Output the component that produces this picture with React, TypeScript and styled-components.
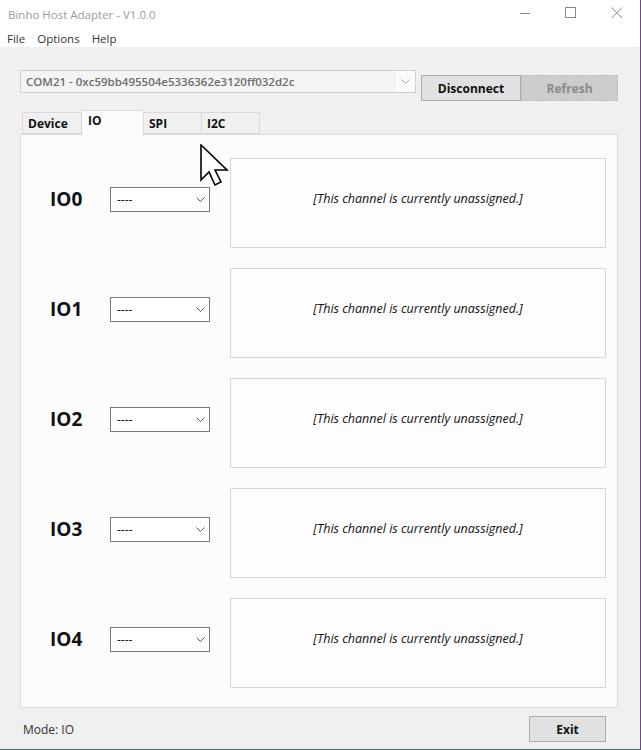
import React from "react";
import styled, { createGlobalStyle } from "styled-components";

const GlobalStyle = createGlobalStyle`
    html, body {
        margin: 0;
        padding: 0;
        background: #f0f0f0;
    }
    * {
        box-sizing: border-box;
    }
`;

const FONT = `"Open Sans", "Noto Sans", sans-serif`;

const channels = ["IO0", "IO1", "IO2", "IO3", "IO4"];

const App = () => {
    return (
        <Window>
            <GlobalStyle />
            <TitleBar>
                <Title>Binho Host Adapter - V1.0.0</Title>
                <Controls>
                    <ControlButton>
                        <svg width="12" height="12" viewBox="0 0 12 12">
                            <path d="M1 6.5h10" stroke="#8a8a8a" strokeWidth="1" />
                        </svg>
                    </ControlButton>
                    <ControlButton>
                        <svg width="12" height="12" viewBox="0 0 12 12">
                            <rect x="0.5" y="0.5" width="10" height="10" fill="none" stroke="#8a8a8a" strokeWidth="1" />
                        </svg>
                    </ControlButton>
                    <ControlButton>
                        <svg width="12" height="12" viewBox="0 0 12 12">
                            <path d="M0.5 0.5l10.5 10.5M11 0.5L0.5 11" stroke="#8a8a8a" strokeWidth="1" />
                        </svg>
                    </ControlButton>
                </Controls>
            </TitleBar>
            <MenuBar>
                <MenuItem>File</MenuItem>
                <MenuItem>Options</MenuItem>
                <MenuItem>Help</MenuItem>
            </MenuBar>
            <Body>
                <TopRow>
                    <Combo>
                        <ComboText>COM21 - 0xc59bb495504e5336362e3120ff032d2c</ComboText>
                        <ComboArrow>
                            <svg width="9" height="6" viewBox="0 0 9 6">
                                <path d="M0.5 0.5l4 4 4-4" fill="none" stroke="#a0a0a0" strokeWidth="1" />
                            </svg>
                        </ComboArrow>
                    </Combo>
                    <ButtonGroup>
                        <PushButton>Disconnect</PushButton>
                        <PushButton disabled>Refresh</PushButton>
                    </ButtonGroup>
                </TopRow>
                <TabStrip>
                    <Tab $width={60}>Device</Tab>
                    <Tab $width={63} $active>
                        IO
                    </Tab>
                    <Tab $width={59}>SPI</Tab>
                    <Tab $width={59}>I2C</Tab>
                </TabStrip>
                <Panel>
                    {channels.map((name) => (
                        <ChannelRow key={name}>
                            <ChannelLabel>{name}</ChannelLabel>
                            <Select>
                                <span>----</span>
                                <svg width="9" height="6" viewBox="0 0 9 6">
                                    <path d="M0.5 0.5l4 4 4-4" fill="none" stroke="#555" strokeWidth="1" />
                                </svg>
                            </Select>
                            <ChannelBox>[This channel is currently unassigned.]</ChannelBox>
                        </ChannelRow>
                    ))}
                </Panel>
                <StatusRow>
                    <Mode>Mode: IO</Mode>
                    <ExitButton>Exit</ExitButton>
                </StatusRow>
            </Body>
            <Cursor>
                <svg width="30" height="44" viewBox="0 0 30 44">
                    <path
                        d="M1 1 L1 36 L9 28 L15 41 L21 38 L15 26 L27 26 Z"
                        fill="#fff"
                        stroke="#000"
                        strokeWidth="1.6"
                        strokeLinejoin="miter"
                    />
                </svg>
            </Cursor>
        </Window>
    );
};

export default App;

const Window = styled.div`
    position: relative;
    width: 641px;
    height: 750px;
    display: flex;
    flex-direction: column;
    background: #f0f0f0;
    border-right: 1px solid #6e4683;
    border-bottom: 1px solid #3f6a66;
    font-family: ${FONT};
    overflow: hidden;
`;

const TitleBar = styled.div`
    height: 30px;
    background: #fff;
    display: flex;
    align-items: center;
    padding-left: 8px;
`;

const Title = styled.div`
    flex: 1;
    font-size: 11.5px;
    color: #9a9a9a;
    padding-bottom: 2px;
`;

const Controls = styled.div`
    display: flex;
    height: 100%;
`;

const ControlButton = styled.div`
    width: 46px;
    height: 100%;
    display: flex;
    align-items: center;
    justify-content: center;
    padding-bottom: 4px;
`;

const MenuBar = styled.div`
    height: 17px;
    background: #fff;
    display: flex;
    align-items: center;
    padding-left: 1px;
`;

const MenuItem = styled.div`
    font-size: 11.5px;
    color: #333;
    padding: 0 6px;
    line-height: 17px;
`;

const Body = styled.div`
    flex: 1;
    display: flex;
    flex-direction: column;
    padding: 23px 20px 0 20px;
`;

const TopRow = styled.div`
    display: flex;
    align-items: flex-start;
    gap: 5px;
`;

const Combo = styled.div`
    width: 396px;
    flex-shrink: 0;
    height: 23px;
    border: 1px solid #cfcfcf;
    background: #f4f4f4;
    display: flex;
    align-items: center;
    padding-left: 5px;
`;

const ComboText = styled.div`
    flex: 1;
    font-size: 11.5px;
    font-weight: 600;
    color: #6d6d6d;
    white-space: nowrap;
    overflow: hidden;
`;

const ComboArrow = styled.div`
    width: 19px;
    height: 100%;
    display: flex;
    align-items: center;
    justify-content: center;
    background: #fbfbfb;
`;

const ButtonGroup = styled.div`
    display: flex;
    flex-shrink: 0;
    margin-top: 5px;
`;

const PushButton = styled.button`
    width: ${(p) => (p.disabled ? "97px" : "100px")};
    height: 26px;
    font-family: ${FONT};
    font-size: 12px;
    font-weight: 700;
    color: ${(p) => (p.disabled ? "#8a8a8a" : "#111")};
    background: ${(p) => (p.disabled ? "#cccccc" : "#e1e1e1")};
    border: 1px ${(p) => (p.disabled ? "dashed #bfbfbf" : "solid #adadad")};
    padding: 0;
`;

const TabStrip = styled.div`
    display: flex;
    align-items: flex-end;
    margin-top: 9px;
    margin-left: 3px;
    height: 24px;
    position: relative;
    z-index: 1;
`;

const Tab = styled.div<{ $width: number; $active?: boolean }>`
    width: ${(p) => p.$width}px;
    height: ${(p) => (p.$active ? "25px" : "22px")};
    margin-bottom: ${(p) => (p.$active ? "-1px" : "0")};
    background: ${(p) => (p.$active ? "#fcfcfc" : "#f0f0f0")};
    border: 1px solid #d9d9d9;
    border-bottom: ${(p) => (p.$active ? "none" : "1px solid #d9d9d9")};
    margin-left: -1px;
    font-size: 12px;
    font-weight: 700;
    color: #111;
    display: flex;
    align-items: ${(p) => (p.$active ? "flex-start" : "center")};
    padding: ${(p) => (p.$active ? "1px 0 0 6px" : "0 0 0 5px")};
`;

const Panel = styled.div`
    width: 598px;
    height: 574px;
    background: #fcfcfc;
    border: 1px solid #dadada;
    display: flex;
    flex-direction: column;
    gap: 20px;
    padding: 23px 11px 0 0;
`;

const ChannelRow = styled.div`
    display: flex;
    align-items: center;
    height: 90px;
`;

const ChannelLabel = styled.div`
    width: 89px;
    padding-left: 29px;
    margin-bottom: 8px;
    font-size: 19px;
    font-weight: 700;
    color: #111;
`;

const Select = styled.div`
    width: 100px;
    height: 25px;
    border: 1px solid #7a7a7a;
    background: #fff;
    display: flex;
    align-items: center;
    justify-content: space-between;
    padding: 0 4px 0 6px;
    font-size: 12px;
    color: #111;
    margin-right: 20px;
    margin-bottom: 7px;
`;

const ChannelBox = styled.div`
    flex: 1;
    height: 100%;
    border: 1px solid #d6d6d6;
    background: #fdfdfd;
    display: flex;
    align-items: center;
    justify-content: center;
    font-size: 12.5px;
    font-style: italic;
    color: #111;
    padding-bottom: 9px;
`;

const StatusRow = styled.div`
    display: flex;
    align-items: center;
    justify-content: space-between;
    margin-top: 8px;
    padding-left: 3px;
    padding-right: 14px;
`;

const Mode = styled.div`
    font-size: 12px;
    color: #333;
`;

const ExitButton = styled.button`
    width: 77px;
    height: 26px;
    font-family: ${FONT};
    font-size: 12px;
    font-weight: 700;
    color: #111;
    background: #e1e1e1;
    border: 1px solid #adadad;
    padding: 0;
`;

const Cursor = styled.div`
    position: absolute;
    left: 200px;
    top: 144px;
    z-index: 5;
    pointer-events: none;
`;
